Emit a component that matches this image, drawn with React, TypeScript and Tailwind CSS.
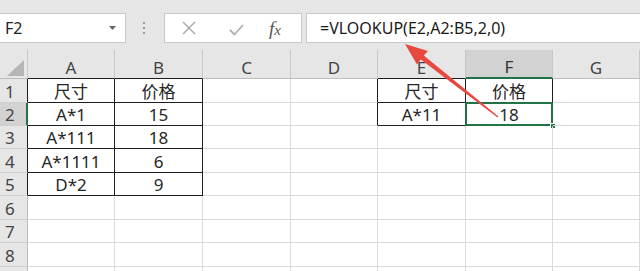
import React from "react";

const COLS = ["A", "B", "C", "D", "E", "F", "G"];
const ROW_H = [24, 23, 23, 24, 23, 24, 23, 24, 24];

const DATA: Record<string, string> = {
  A1: "尺寸", B1: "价格", E1: "尺寸", F1: "价格",
  A2: "A*1", B2: "15", E2: "A*11", F2: "18",
  A3: "A*111", B3: "18",
  A4: "A*1111", B4: "6",
  A5: "D*2", B5: "9",
};

function inTable(c: string, r: number) {
  return ((c === "A" || c === "B") && r <= 5) || ((c === "E" || c === "F") && r <= 2);
}

function Cell({ c, r }: { c: string; r: number }) {
  const idx = COLS.indexOf(c);
  const next = COLS[idx + 1];
  const rightBlack = inTable(c, r) || (next !== undefined && inTable(next, r));
  const bottomBlack = inTable(c, r);
  const selected = c === "F" && r === 2;
  const rCls = rightBlack ? "border-r border-r-[#1e1e1e]" : "border-r border-r-[#dadada]";
  const bCls = bottomBlack ? "border-b border-b-[#1e1e1e]" : "border-b border-b-[#dadada]";
  const text = DATA[c + r];
  return (
    <div className={`relative flex items-end justify-center pb-[2px] leading-[17px] text-[17px] text-[#262626] ${rCls} ${bCls}`}>
      {text}
      {selected && (
        <>
          <div className="absolute -left-[1px] -top-[1px] -right-[1px] -bottom-[1px] border-2 border-[#217346]" />
          <div className="absolute -right-[4px] -bottom-[4px] w-[6px] h-[6px] bg-[#217346] border border-white" />
        </>
      )}
    </div>
  );
}

export default function App() {
  return (
    <div
      className="relative w-[640px] h-[271px] overflow-hidden bg-white"
      style={{ fontFamily: '"Noto Sans", "Noto Sans CJK SC", sans-serif' }}
    >
      {/* Toolbar */}
      <div className="h-[50px] bg-[#e6e6e6] flex items-start pt-[13px]">
        <div className="w-[126px] h-[30px] bg-white border border-[#c8c8c8] border-l-0 flex items-center justify-between pl-[5px] pr-[9px]">
          <span className="text-[16px] text-[#222] leading-none">F2</span>
          <svg width="7" height="4" viewBox="0 0 7 4">
            <polygon points="0,0 7,0 3.5,4" fill="#666" />
          </svg>
        </div>
        <div className="w-[38px] h-[30px] flex flex-col items-center justify-center gap-[3px] pr-[2px]">
          <div className="w-[2px] h-[2px] bg-[#9a9a9a]" />
          <div className="w-[2px] h-[2px] bg-[#9a9a9a]" />
          <div className="w-[2px] h-[2px] bg-[#9a9a9a]" />
        </div>
        <div className="w-[138px] h-[30px] bg-white border border-[#c8c8c8] flex items-center">
          <svg className="ml-[17px]" width="14" height="14" viewBox="0 0 14 14">
            <path d="M1 1 L13 13 M13 1 L1 13" stroke="#a8a8a8" strokeWidth="1.4" />
          </svg>
          <svg className="ml-[33px] mt-[3px]" width="15" height="12" viewBox="0 0 15 12">
            <path d="M1 6 L5.5 10.5 L14 1" stroke="#b0b0b0" strokeWidth="1.8" fill="none" />
          </svg>
          <span
            className="ml-[25px] text-[19px] italic text-[#555] leading-none"
            style={{ fontFamily: '"Liberation Serif", serif' }}
          >
            f<span className="text-[15px]">x</span>
          </span>
        </div>
        <div className="ml-[4px] flex-1 h-[30px] bg-white border border-[#c8c8c8] border-r-0 flex items-center pl-[13px]">
          <span className="text-[16px] text-[#1a1a1a] leading-none">=VLOOKUP(E2,A2:B5,2,0)</span>
        </div>
      </div>

      {/* Grid */}
      <div className="grid grid-cols-[28px_87px_88px_88px_87px_88px_87px_87px]">
        {/* header row */}
        <div className="h-[29px] bg-[#e6e6e6] border-b border-b-[#bdbdbd] border-r border-r-[#c8c8c8] flex items-end justify-end pb-[2px] pr-[3px]">
          <svg width="17" height="16" viewBox="0 0 17 16">
            <polygon points="0,16 17,16 17,0" fill="#b5b5b5" />
          </svg>
        </div>
        {COLS.map((c) => {
          const sel = c === "F";
          const black = c === "A" || c === "B" || c === "E";
          const cls = sel
            ? "bg-[#d2d2d2] border-b-2 border-b-[#217346] text-[#333]"
            : black
            ? "bg-[#e6e6e6] border-b border-b-[#1e1e1e] text-[#444]"
            : "bg-[#e6e6e6] border-b border-b-[#bdbdbd] text-[#444]";
          return (
            <div
              key={c}
              className={`h-[29px] flex items-end justify-center pb-[2px] leading-[17px] text-[17px] border-r border-r-[#c8c8c8] ${cls}`}
            >
              {c}
            </div>
          );
        })}
        {ROW_H.map((h, i) => {
          const r = i + 1;
          const sel = r === 2;
          const hdrCls = sel
            ? "bg-[#d2d2d2] border-r-2 border-r-[#217346]"
            : r <= 5
            ? "bg-[#e6e6e6] border-r border-r-[#1e1e1e]"
            : "bg-[#e6e6e6] border-r border-r-[#bdbdbd]";
          return (
            <React.Fragment key={r}>
              <div
                className={`flex items-end pl-[5px] pb-[2px] leading-[17px] text-[17px] text-[#444] border-b border-b-[#cfcfcf] ${hdrCls}`}
                style={{ height: h }}
              >
                {r <= 8 ? r : ""}
              </div>
              {COLS.map((c) => (
                <Cell key={c + r} c={c} r={r} />
              ))}
            </React.Fragment>
          );
        })}
      </div>

      {/* Red annotation arrow */}
      <svg className="absolute left-0 top-0 pointer-events-none" width="640" height="271" viewBox="0 0 640 271">
        <polygon
          points="405,44 428,51 423.8,55.6 498.4,116.6 497.6,117.4 420.8,59.6 417,64.5"
          fill="#e8483e"
        />
      </svg>
    </div>
  );
}
